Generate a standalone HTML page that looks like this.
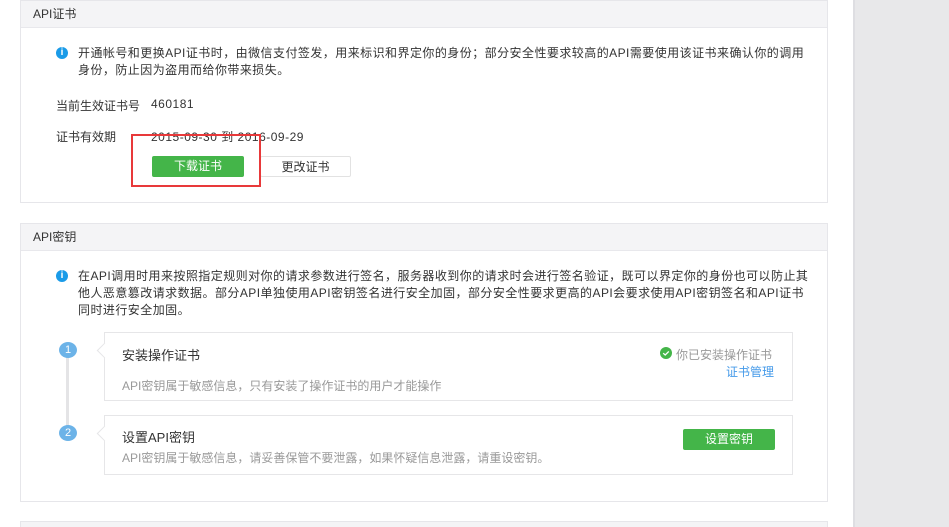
<!DOCTYPE html>
<html><head><meta charset="utf-8"><style>
*{margin:0;padding:0;box-sizing:border-box}
html,body{width:949px;height:527px;overflow:hidden}
body{background:#fff;font-family:"Liberation Sans","Noto Sans CJK SC",sans-serif;font-size:12px;color:#333;position:relative}
.side{position:absolute;left:853px;top:0;width:96px;height:527px;background:#e8e8ea;border-left:2px solid #dedee2}
.panel{position:absolute;left:20px;width:808px;border:1px solid #e6e6ea;background:#fff}
.hd{height:27px;background:#f4f4f6;border-bottom:1px solid #e8e8ec;padding-left:12px;line-height:26px;font-size:12px;color:#333}
.ab{position:absolute}
.info{position:absolute;width:12px;height:12px;border-radius:50%;background:#1a9be8;color:#fff;font-size:10px;font-weight:bold;text-align:center;line-height:12px}
.txt{letter-spacing:0.45px;line-height:17px;white-space:nowrap}
.btn{position:absolute;height:21px;text-align:center;line-height:21px;font-size:12px;border-radius:2px}
.g{background:#44b549;color:#fff}
.w{background:#fff;border:1px solid #e2e2e2;color:#333}
.card{position:absolute;left:83px;width:689px;border:1px solid #e6e6e8;background:#fff}
.card:before{content:"";position:absolute;left:-6px;top:12px;width:10px;height:10px;background:#fff;border-left:1px solid #e6e6e8;border-bottom:1px solid #e6e6e8;transform:rotate(45deg)}
.num{position:absolute;left:38px;width:18px;height:16px;border-radius:50%;background:#6cb3e8;color:#fff;text-align:center;line-height:16px;font-size:11px}
.gray{color:#999}
</style></head><body>
<div class="side"></div>
<div class="panel" style="top:0;height:203px">
 <div class="hd">API证书</div>
 <div class="info" style="left:35px;top:46px">i</div>
 <div class="ab txt" style="left:57px;top:44px">开通帐号和更换API证书时，由微信支付签发，用来标识和界定你的身份；部分安全性要求较高的API需要使用该证书来确认你的调用<br>身份，防止因为盗用而给你带来损失。</div>
 <div class="ab" style="left:35px;top:96px">当前生效证书号</div>
 <div class="ab" style="left:130px;top:96px;letter-spacing:0.5px">460181</div>
 <div class="ab" style="left:35px;top:127px">证书有效期</div>
 <div class="ab" style="left:130px;top:127px;letter-spacing:0.5px">2015-09-30 到 2016-09-29</div>
 <div class="btn g" style="left:131px;top:155px;width:92px">下载证书</div>
 <div class="btn w" style="left:239px;top:155px;width:91px">更改证书</div>
 <div class="ab" style="left:110px;top:133px;width:130px;height:53px;border:2px solid #e8393a"></div>
</div>
<div class="panel" style="top:223px;height:279px">
 <div class="hd">API密钥</div>
 <div class="info" style="left:35px;top:46px">i</div>
 <div class="ab txt" style="left:57px;top:44px">在API调用时用来按照指定规则对你的请求参数进行签名，服务器收到你的请求时会进行签名验证，既可以界定你的身份也可以防止其<br>他人恶意篡改请求数据。部分API单独使用API密钥签名进行安全加固，部分安全性要求更高的API会要求使用API密钥签名和API证书<br>同时进行安全加固。</div>
 <div class="ab" style="left:45px;top:126px;width:3px;height:84px;background:#e4e4e6"></div>
 <div class="num" style="top:118px">1</div>
 <div class="num" style="top:201px">2</div>
 <div class="card" style="top:108px;height:69px">
  <div class="ab" style="left:17px;top:12px;font-size:13px">安装操作证书</div>
  <div class="ab gray" style="left:17px;top:44px">API密钥属于敏感信息，只有安装了操作证书的用户才能操作</div>
  <svg class="ab" style="left:555px;top:14px" width="12" height="12" viewBox="0 0 12 12"><circle cx="6" cy="6" r="6" fill="#44b549"/><path d="M3.2 6.2l2 1.8 3.6-3.6" stroke="#fff" stroke-width="1.3" fill="none"/></svg>
  <div class="ab gray" style="left:571px;top:13px">你已安装操作证书</div>
  <div class="ab" style="left:621px;top:30px;color:#459ae9">证书管理</div>
 </div>
 <div class="card" style="top:191px;height:60px">
  <div class="ab" style="left:17px;top:11px;font-size:13px">设置API密钥</div>
  <div class="ab gray" style="left:17px;top:33px">API密钥属于敏感信息，请妥善保管不要泄露，如果怀疑信息泄露，请重设密钥。</div>
  <div class="btn g" style="left:578px;top:13px;width:92px">设置密钥</div>
 </div>
</div>
<div class="panel" style="top:521px;height:6px;background:#f4f4f6;border-bottom:none"></div>
</body></html>
